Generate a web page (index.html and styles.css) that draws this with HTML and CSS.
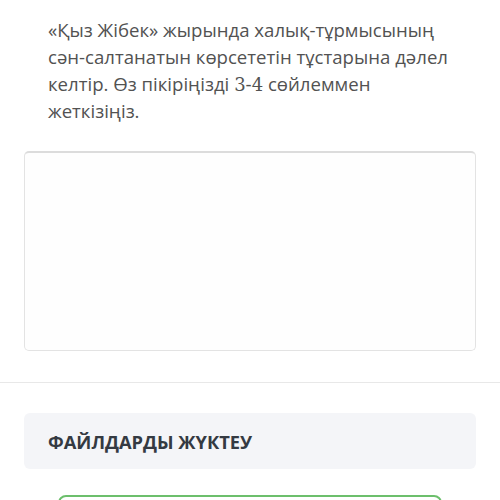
FILE: index.html
```html
<!DOCTYPE html>
<html lang="kk">
<head>
<meta charset="utf-8">
<link rel="stylesheet" href="styles.css">
</head>
<body>
<div class="page">
  <section class="question">
    <p class="q-text">«Қыз Жібек» жырында халық-тұрмысының сән-салтанатын көрсететін тұстарына дәлел келтір. Өз пікіріңізді <span class="num">3-4</span> сөйлеммен жеткізіңіз.</p>
    <div class="answer"></div>
  </section>
  <hr class="divider">
  <section class="files">
    <div class="files-head">ФАЙЛДАРДЫ ЖҮКТЕУ</div>
    <div class="upload"></div>
  </section>
</div>
</body>
</html>
```
FILE: styles.css
```css
html, body {
  margin: 0;
  padding: 0;
  background: #ffffff;
}
body {
  height: 500px;
  overflow: hidden;
}
.page {
  width: 500px;
  font-family: "Open Sans", "Noto Sans", sans-serif;
}
.question {
  padding: 16px 24px 0 24px;
}
.q-text {
  margin: 0;
  padding: 0 20px 0 24px;
  font-size: 18.6px;
  line-height: 27px;
  color: #525252;
}
.num {
  font-family: "DejaVu Serif", "Liberation Serif", serif;
  font-size: 18px;
  line-height: 1;
}
.answer {
  margin-top: 27px;
  height: 197px;
  border: 1px solid #e3e3e3;
  border-top: 2px solid #dcdcdc;
  border-radius: 5px;
  background: #fefefe;
}
.divider {
  margin: 31px 0 0 0;
  border: 0;
  border-top: 1px solid #e8e8e8;
  height: 0;
}
.files {
  padding: 30px 24px 0 24px;
}
.files-head {
  height: 56px;
  display: flex;
  align-items: center;
  padding: 0 24px;
  background: #f4f5f8;
  border-radius: 6px;
  font-weight: 700;
  font-size: 18.3px;
  color: #343a42;
}
.upload {
  margin: 26px 34px 0 34px;
  height: 40px;
  border: 2px solid #6cbf6c;
  border-radius: 8px;
}
```
